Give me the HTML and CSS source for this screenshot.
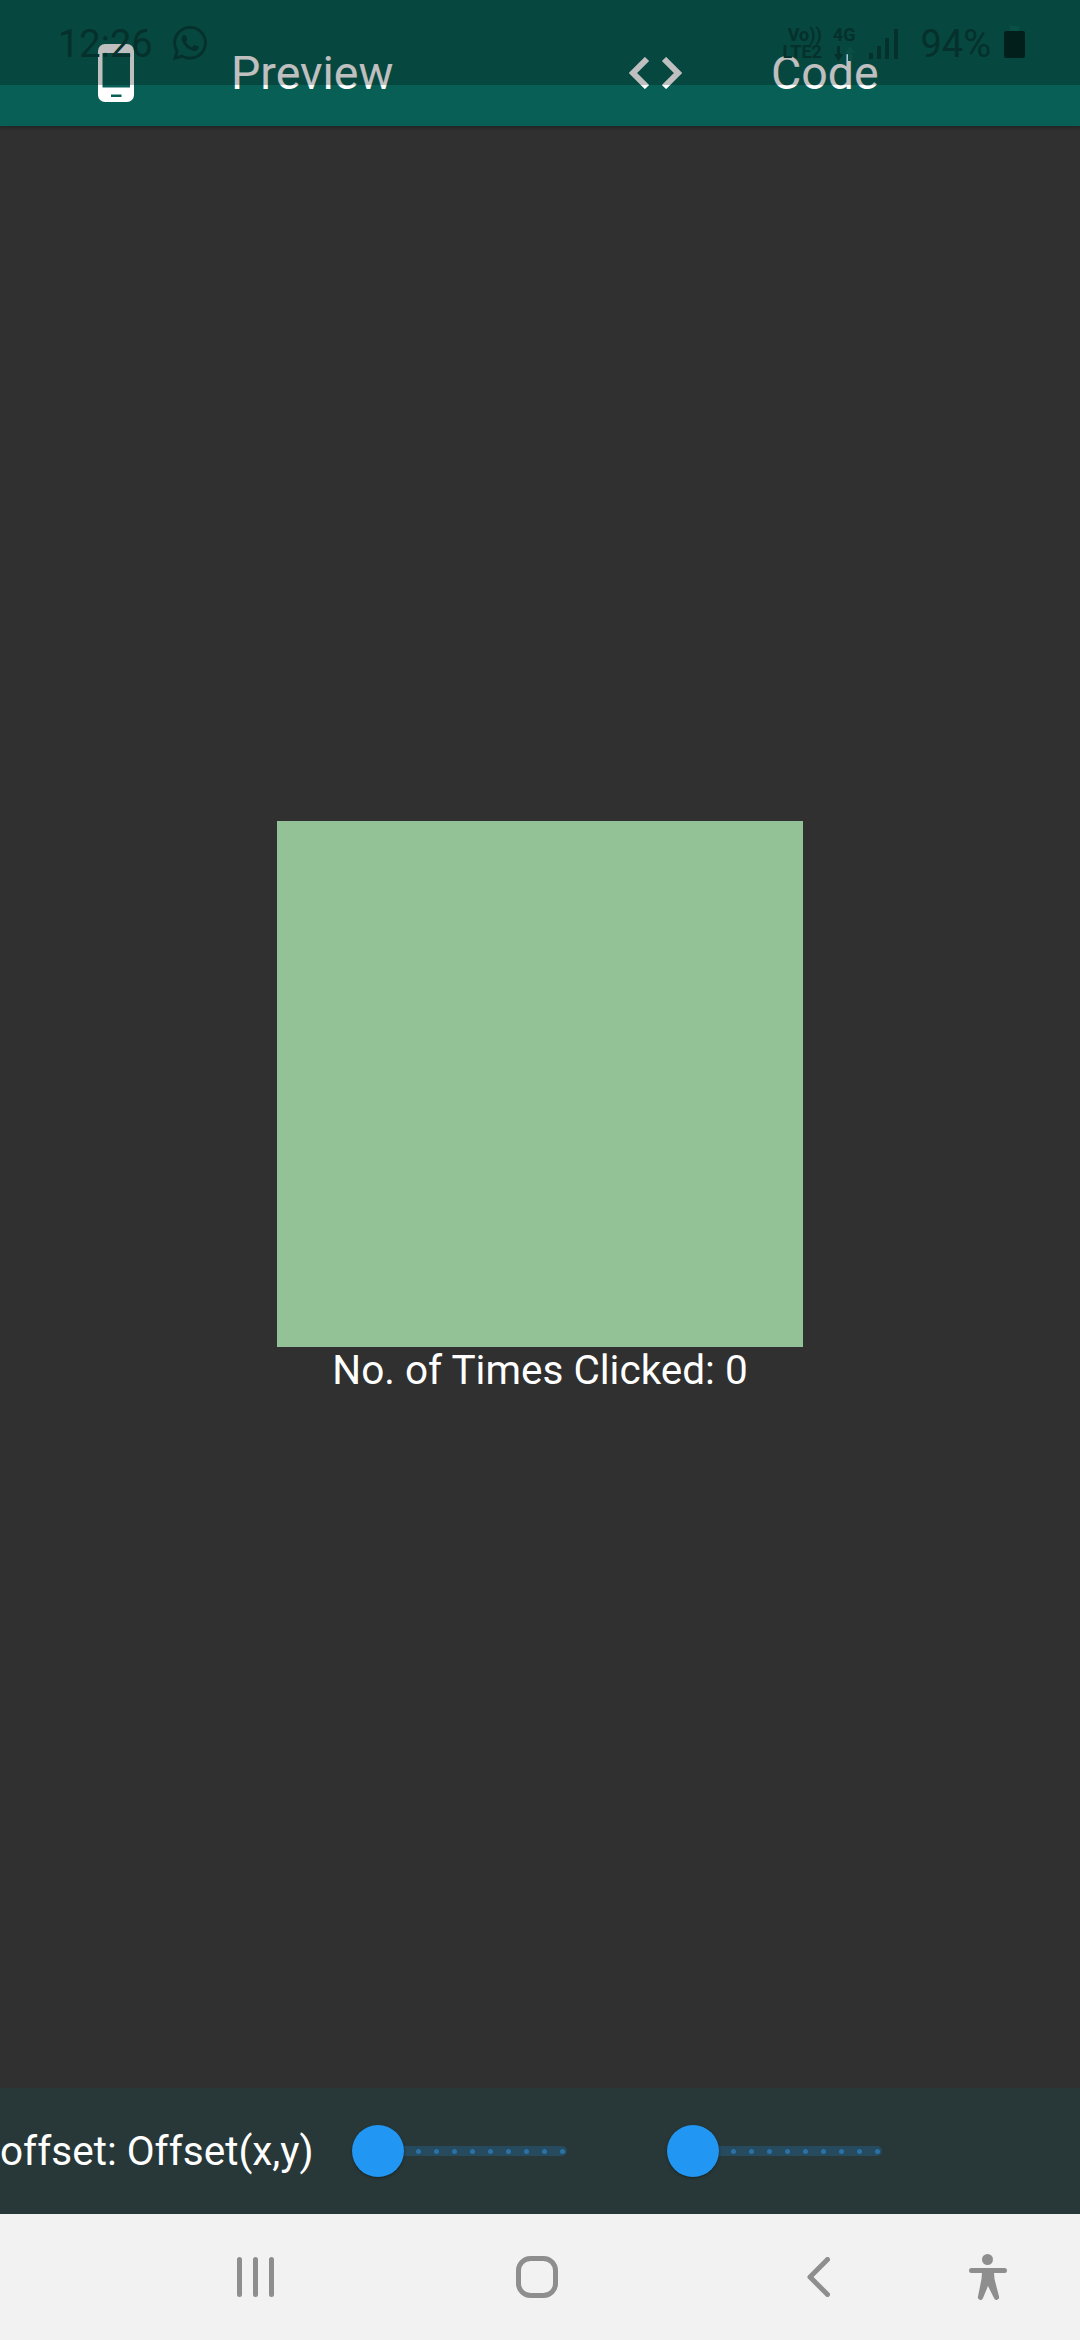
FILE: index.html
```html
<!DOCTYPE html>
<html lang="en">
<head>
  <meta charset="UTF-8">
  <meta name="viewport" content="width=device-width, initial-scale=1.0">
  <title>Preview</title>
  <link rel="stylesheet" href="styles.css">
</head>
<body>

  <div class="screen">
    <header class="appbar">
      <div class="tab">
        <span class="tab-icon">
          <svg width="36" height="58" viewBox="0 0 36 58">
            <path fill="#fff" fill-rule="evenodd" d="M7 0h22a7 7 0 0 1 7 7v44a7 7 0 0 1-7 7H7a7 7 0 0 1-7-7V7a7 7 0 0 1 7-7zM4.500 9v34.500h27.500V9zM13 50.500v2.500h10.500v-2.500z"/>
          </svg>
        </span>
        <span class="tab-label">Preview</span>
      </div>
      <div class="tab">
        <span class="tab-icon">
          <svg width="53" height="32" viewBox="0 0 53 32">
            <path fill="none" stroke="#fff" stroke-width="6" d="M18 2L4 16l14 14M35 2l14 14-14 14"/>
          </svg>
        </span>
        <span class="tab-label">Code</span>
      </div>
    </header>

    <!-- barra de estado, va encima del appbar -->
    <div class="statusbar">
      <span class="time">12:26</span>
      <svg class="wa" width="34" height="34" viewBox="0 0 24 24">
        <path fill="#05302b" d="M17.472 14.382c-.297-.149-1.758-.867-2.03-.967-.273-.099-.471-.148-.67.15-.197.297-.767.966-.94 1.164-.173.199-.347.223-.644.075-.297-.15-1.255-.463-2.39-1.475-.883-.788-1.48-1.761-1.653-2.059-.173-.297-.018-.458.13-.606.134-.133.298-.347.446-.52.149-.174.198-.298.298-.497.099-.198.05-.371-.025-.52-.075-.149-.669-1.612-.916-2.207-.242-.579-.487-.5-.669-.51-.173-.008-.371-.01-.57-.01-.198 0-.52.074-.792.372-.272.297-1.04 1.016-1.04 2.479 0 1.462 1.065 2.875 1.213 3.074.149.198 2.096 3.2 5.077 4.487.709.306 1.262.489 1.694.625.712.227 1.36.195 1.871.118.571-.085 1.758-.719 2.006-1.413.248-.694.248-1.289.173-1.413-.074-.124-.272-.198-.57-.347m-5.421 7.403h-.004a9.87 9.87 0 01-5.031-1.378l-.361-.214-3.741.982.998-3.648-.235-.374a9.86 9.86 0 01-1.51-5.26c.001-5.45 4.436-9.884 9.888-9.884 2.64 0 5.122 1.03 6.988 2.898a9.825 9.825 0 012.893 6.994c-.003 5.45-4.437 9.884-9.885 9.884m8.413-18.297A11.815 11.815 0 0012.05 0C5.495 0 .16 5.335.157 11.892c0 2.096.547 4.142 1.588 5.945L.057 24l6.305-1.654a11.882 11.882 0 005.683 1.448h.005c6.554 0 11.89-5.335 11.893-11.893a11.821 11.821 0 00-3.48-8.413Z"/>
      </svg>
      <div class="status-right">
        <div class="volte">
          <span>Vo))</span>
          <span>LTE2</span>
        </div>
        <div class="net">
          <span>4G</span>
          <svg width="22" height="15" viewBox="0 0 22 15">
            <path fill="#05302b" d="M4 0h3v8h3l-4.500 7L1 8h3z"/>
            <path fill="#0a4f46" d="M15 15h3V7h4l-5-7-5 7h3z"/>
          </svg>
        </div>
        <svg class="signal" width="29" height="30" viewBox="0 0 29 30">
          <path fill="#05302b" d="M0 24h4v6H0zM8 17h4v13H8zM16 9h4v21h-4zM25 0h4v30h-4z"/>
        </svg>
        <span class="battery-pct">94%</span>
        <svg class="battery" width="21" height="32" viewBox="0 0 21 32">
          <path fill="#0a4f46" d="M6 0h9v5H6z"/>
          <rect y="5" width="21" height="27" rx="2" fill="#031f1c"/>
        </svg>
      </div>
    </div>

    <main class="content">
      <div class="box"></div>
      <p class="clicks">No. of Times Clicked: 0</p>
    </main>

    <section class="controls">
      <span class="offset-label">offset: Offset(x,y)</span>
      <div class="slider slider-x">
        <span class="thumb"></span>
        <div class="track">
          <i></i><i></i><i></i><i></i><i></i><i></i><i></i><i></i><i></i>
        </div>
      </div>
      <div class="slider slider-y">
        <span class="thumb"></span>
        <div class="track">
          <i></i><i></i><i></i><i></i><i></i><i></i><i></i><i></i><i></i>
        </div>
      </div>
    </section>

    <nav class="navbar">
      <svg class="nav-recents" width="37" height="40" viewBox="0 0 37 40">
        <path fill="none" stroke="#8e8e8e" stroke-width="5" stroke-linecap="round" d="M2.500 2.500v35M18.500 2.500v35M34.500 2.500v35"/>
      </svg>
      <svg class="nav-home" width="42" height="42" viewBox="0 0 42 42">
        <rect x="2.500" y="2.500" width="37" height="37" rx="12" fill="none" stroke="#8e8e8e" stroke-width="5"/>
      </svg>
      <svg class="nav-back" width="23" height="40" viewBox="0 0 23 40">
        <path fill="none" stroke="#8e8e8e" stroke-width="5" stroke-linecap="round" stroke-linejoin="round" d="M20.500 2.500L3 20l17.500 17.500"/>
      </svg>
      <svg class="nav-a11y" width="38" height="46" viewBox="0 0 38 46">
        <circle cx="18.500" cy="5.500" r="5.500" fill="#8e8e8e"/>
        <path fill="#8e8e8e" d="M2.500 14h33a2.500 2.500 0 0 1 0 5H25l.5 6 4.500 17.500a2.500 2.500 0 0 1-5 1.500L19 32 14 44a2.500 2.500 0 0 1-5-1.500L12.500 25l.5-6H2.500a2.500 2.500 0 0 1 0-5z"/>
      </svg>
    </nav>
  </div>

</body>
</html>
```

FILE: styles.css
```css
* {
  box-sizing: border-box;
}
body {
  margin: 0;
  font-family: Roboto, "Noto Sans", sans-serif;
  background-color: #303030;
}
.screen {
  position: relative;
  width: 1080px;
  height: 2340px;
  display: flex;
  flex-direction: column;
  overflow: hidden;
}

/* appbar con tabs */
.appbar {
  height: 126px;
  display: flex;
  padding-top: 44px;
  background-color: #085f55;
  box-shadow: 0 2px 3px rgba(0, 0, 0, 0.25);
}
.tab {
  flex: 1;
  height: 58px;
  display: flex;
  align-items: center;
  padding-left: 89px;
  color: #fff;
}
.tab-icon {
  width: 53px;
  display: flex;
  justify-content: center;
}
.tab-label {
  margin-left: 89px;
  font-size: 46.500px;
}

/* status bar */
.statusbar {
  position: absolute;
  top: 0;
  left: 0;
  width: 100%;
  height: 85px;
  padding: 26px 55px 0 58px;
  display: flex;
  align-items: flex-start;
  background-color: rgba(0, 0, 0, 0.25);
  color: #05302b;
}
.time {
  font-size: 38px;
  line-height: 36px;
}
.wa {
  margin-left: 20px;
}
.status-right {
  margin-left: auto;
  display: flex;
  align-items: flex-start;
}
.volte {
  display: flex;
  flex-direction: column;
  align-items: flex-end;
  font-size: 18px;
  font-weight: 700;
  line-height: 17px;
}
.net {
  margin-left: 11px;
  display: flex;
  flex-direction: column;
  align-items: center;
  font-size: 18px;
  font-weight: 700;
  line-height: 17px;
}
.net svg {
  margin-top: 3px;
}
.signal {
  margin: 3px 0 0 14px;
}
.battery-pct {
  margin-left: 22px;
  font-size: 38px;
  line-height: 36px;
}
.battery {
  margin-left: 13px;
}

/* contenido central */
.content {
  flex: 1;
  display: flex;
  flex-direction: column;
  align-items: center;
  justify-content: center;
}
.box {
  width: 526px;
  height: 526px;
  background-color: #94c297;
}
.clicks {
  margin: 0;
  font-size: 40.500px;
  line-height: 47px;
  color: #fff;
}

/* sliders */
.controls {
  height: 126px;
  display: flex;
  align-items: center;
  background-color: #283838;
}
.offset-label {
  width: 352px;
  font-size: 40.500px;
  color: #fff;
}
.slider {
  display: flex;
  align-items: center;
}
.slider-y {
  margin-left: 100px;
}
.thumb {
  width: 52px;
  height: 52px;
  border-radius: 50%;
  background-color: #2196f3;
  box-shadow: 0 1px 3px rgba(0, 0, 0, 0.4);
  position: relative;
}
.track {
  width: 163px;
  height: 10px;
  padding: 0 2.500px 0 12px;
  display: flex;
  align-items: center;
  justify-content: space-between;
  background-color: #264a5e;
  border-radius: 0 5px 5px 0;
}
.track i {
  width: 5px;
  height: 5px;
  border-radius: 50%;
  background-color: #2a72a6;
}

/* barra de navegacion */
.navbar {
  height: 126px;
  display: flex;
  align-items: center;
  padding-left: 237px;
  background-color: #f2f2f2;
}
.nav-home {
  margin-left: 242px;
}
.nav-back {
  margin-left: 249px;
}
.nav-a11y {
  margin-left: 139px;
}
```
